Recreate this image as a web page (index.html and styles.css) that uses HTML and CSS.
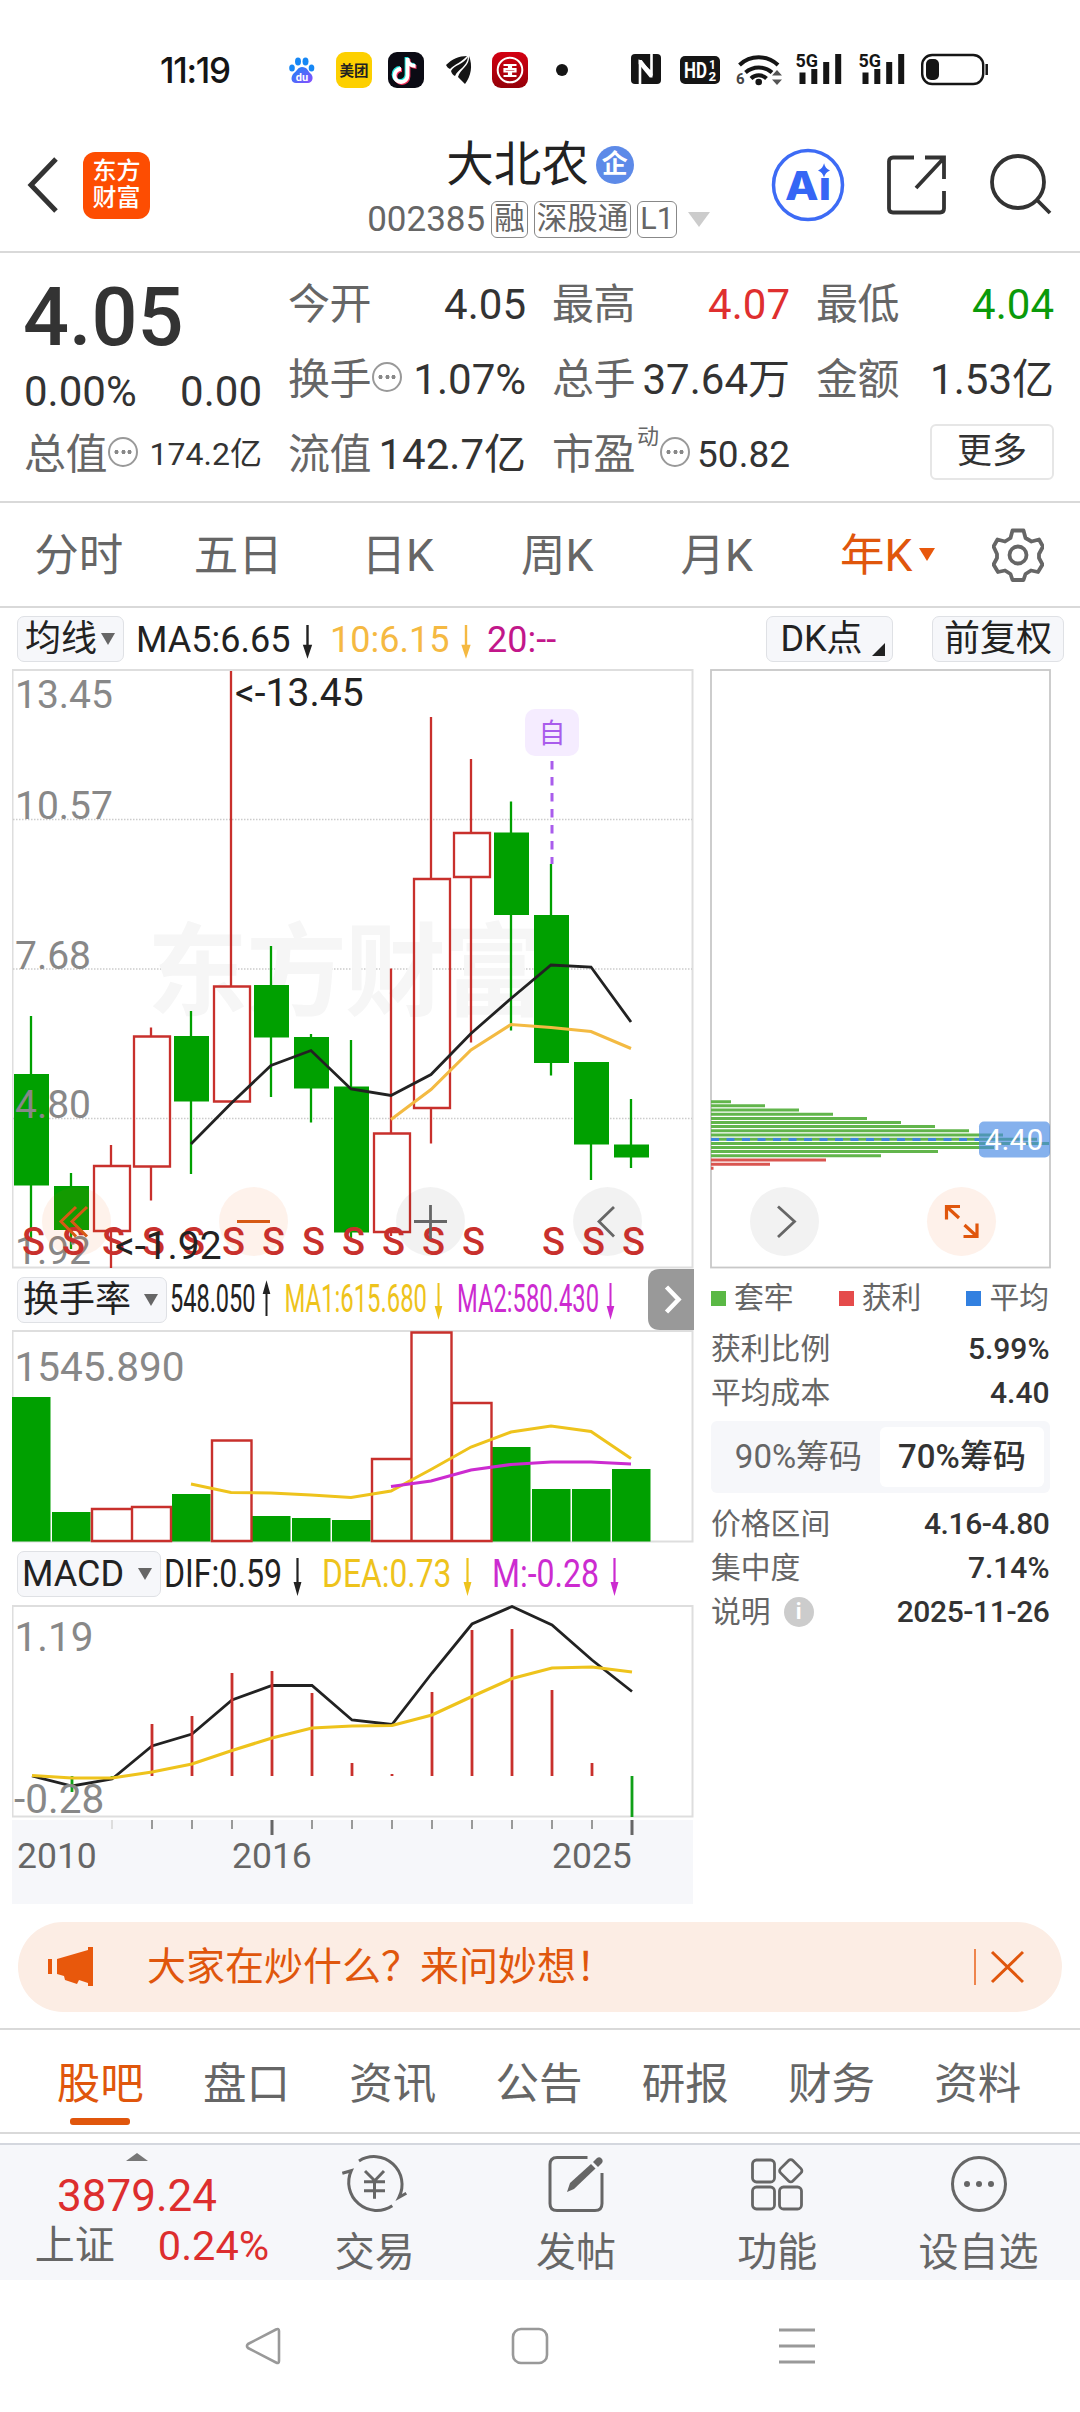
FILE: index.html
```html
<!DOCTYPE html>
<html lang="zh-CN">
<head>
<meta charset="utf-8">
<title>大北农 002385</title>
<link rel="stylesheet" href="styles.css">
</head>
<body>
<div class="screen">

<div class="status">
  <span class="time">11:19</span>
  <svg class="notices" width="282" height="40" viewBox="288 50 282 40">
    <defs>
      <linearGradient id="paw" x1="0" y1="0" x2="1" y2="1"><stop offset="0" stop-color="#1687f5"/><stop offset="1" stop-color="#8a4dff"/></linearGradient>
      <linearGradient id="bank" x1="0" y1="0" x2="0" y2="1"><stop offset="0" stop-color="#d40012"/><stop offset="1" stop-color="#940008"/></linearGradient>
    </defs>
    <g fill="#1687f5"><ellipse cx="292" cy="68" rx="2.800" ry="3.600"/><ellipse cx="298" cy="61.500" rx="3" ry="4"/><ellipse cx="305.500" cy="61.500" rx="3" ry="4"/><ellipse cx="311.500" cy="68" rx="2.800" ry="3.600"/></g>
    <path d="M302 67c5 0 6 4 8 6 5 4 2 10-2 10H296c-5 0-6-6-2-10 3-2 4-6 8-6z" fill="url(#paw)"/>
    <text x="302" y="81" class="tiny white mid" font-size="11">du</text>
    <rect x="336" y="52" width="36" height="36" rx="9" fill="#fdd000"/>
    <text x="354" y="75.500" class="bold mid" font-size="14.500" fill="#222">美团</text>
    <rect x="388" y="52" width="36" height="36" rx="9" fill="#0b0b14"/>
    <g fill="none" stroke-width="3.800"><path d="M407.500 58v17.500a6.500 6.500 0 1 1-6.500-6.500M407.500 58c0 5 3 8 8 8" stroke="#22e6e0" transform="translate(-1 -1)"/><path d="M407.500 58v17.500a6.500 6.500 0 1 1-6.500-6.500M407.500 58c0 5 3 8 8 8" stroke="#f5305c" transform="translate(1 1)"/><path d="M407.500 58v17.500a6.500 6.500 0 1 1-6.500-6.500M407.500 58c0 5 3 8 8 8" stroke="#fff"/></g>
    <path d="M467 56c-8 0-15 3-21 9 1 2 2 3 4 4 5-5 12-7 17-13zM468 57c-4 7-14 8-17 14 1 3 2 4 4 5 3-7 12-9 13-19zM469 56c1 10-9 13-11 21l7 7c6-8 8-18 4-28z" fill="#151515"/>
    <rect x="492" y="52" width="36" height="36" rx="9" fill="url(#bank)"/>
    <circle cx="510" cy="70" r="12.300" fill="none" stroke="#fff" stroke-width="2"/>
    <path d="M503.500 65h5.500v4h-4.500v2.500h4.500v4.500h-5.500M516.500 65H511v4h4.500v2.500H511v4.500h5.500" fill="none" stroke="#fff" stroke-width="2.200"/>
    <circle cx="562" cy="70" r="6" fill="#151515"/>
  </svg>
  <svg class="system" width="358" height="40" viewBox="631 50 358 40">
    <rect x="631" y="54" width="30" height="30" rx="4" fill="#151515"/>
    <path d="M640 84V62l11.500 11V54" fill="none" stroke="#fff" stroke-width="2.600"/><path d="M638.700 60h3l10.800 14v3.500h-2.700L638.700 64z" fill="#fff"/>
    <rect x="680" y="56" width="40" height="28" rx="5" fill="#151515"/>
    <text x="684" y="78" class="cond white" font-size="22" textLength="23" lengthAdjust="spacingAndGlyphs">HD</text>
    <text x="709" y="69" class="bold white" font-size="12">1</text><text x="708.500" y="81" class="bold white" font-size="13.500">2</text>
    <g fill="none" stroke="#151515" stroke-width="4"><path d="M739.500 65a28 28 0 0 1 38.500 0"/><path d="M745.500 72.500a20 20 0 0 1 26.500 0"/><path d="M751 79.500a11 11 0 0 1 15.500 0" transform="translate(0 -1)"/></g>
    <circle cx="758.700" cy="82" r="3.300" fill="#151515"/>
    <text x="736" y="84" class="bold" font-size="15" fill="#444">6</text>
    <path d="M772 75.500l5-5.500 5 5.500zM772 79.500l5 5.500 5-5.500z" fill="#555"/>
    <g id="sim"><text x="795.500" y="66.500" class="bold" font-size="18.500" fill="#151515" textLength="22.500" lengthAdjust="spacingAndGlyphs">5G</text><path d="M802.500 72.500v11.500M814.300 69v15M826.200 62v22M838.200 54v30" fill="none" stroke="#151515" stroke-width="6"/></g>
    <use href="#sim" x="63"/>
    <rect x="922.200" y="55" width="61" height="29" rx="10" fill="none" stroke="#151515" stroke-width="2.400"/>
    <rect x="926" y="59" width="13" height="21" rx="5" fill="#151515"/>
    <path d="M986.700 64v11" stroke="#151515" stroke-width="2.500"/>
  </svg>
</div>

<header class="header">
  <div class="head-left">
    <svg width="32" height="56" viewBox="0 0 32 56"><path d="M29 2L4 28l25 26" fill="none" stroke="#333" stroke-width="5"/></svg>
    <div class="logo"><span>东方</span><span>财富</span></div>
  </div>
  <div class="head-title">
    <div class="name">大北农<span class="qi">企</span></div>
    <div class="code"><span>002385</span><i>融</i><i>深股通</i><i>L1</i><svg width="24" height="17" viewBox="0 0 24 17"><path d="M1 1h22L12 16z" fill="#ccc"/></svg></div>
  </div>
  <div class="head-right">
    <svg width="74" height="74" viewBox="0 0 74 74"><circle cx="37" cy="37" r="34.500" fill="none" stroke="#3d6bf5" stroke-width="3.500"/><text x="14" y="51.500" font-size="40" class="ai" textLength="46" lengthAdjust="spacingAndGlyphs">Ai</text><circle cx="53" cy="20" r="8.500" fill="#fff"/><path d="M53 15c1 4 2.500 6 6 7.500-3.500 1.500-5 3.500-6 7-1-3.500-2.500-5.500-6-7 3.500-1.500 5-3.500 6-7z" fill="#3566f5"/></svg>
    <svg width="60" height="60" viewBox="0 0 60 60" fill="none" stroke="#333" stroke-width="3.800"><path d="M27 2.500H6q-4 0-4 4v47q0 4 4 4h47q4 0 4-4V36M38 2.500h19V24M56 4L29 33"/></svg>
    <svg width="64" height="64" viewBox="0 0 64 64" fill="none" stroke="#333" stroke-width="3.800"><circle cx="29" cy="29" r="26"/><path d="M48 47l13 13"/></svg>
  </div>
</header>

<section class="quote">
  <div class="col">
    <div class="price">4.05</div>
    <div class="change"><b>0.00%</b><b>0.00</b></div>
    <div class="row"><span>总值</span><u class="dots"></u><b class="s32">174.2亿</b></div>
  </div>
  <div class="col">
    <div class="row"><span>今开</span><b>4.05</b></div>
    <div class="row"><span>换手</span><u class="dots"></u><b>1.07%</b></div>
    <div class="row"><span>流值</span><b>142.7亿</b></div>
  </div>
  <div class="col">
    <div class="row"><span>最高</span><b class="up">4.07</b></div>
    <div class="row"><span>总手</span><b>37.64万</b></div>
    <div class="row"><span>市盈</span><sup>动</sup><u class="dots"></u><b class="s37">50.82</b></div>
  </div>
  <div class="col">
    <div class="row"><span>最低</span><b class="down">4.04</b></div>
    <div class="row"><span>金额</span><b>1.53亿</b></div>
    <div class="row"><button class="more">更多</button></div>
  </div>
</section>

<nav class="periods">
  <a>分时</a><a>五日</a><a>日K</a><a>周K</a><a>月K</a><a class="on">年K<svg width="16" height="13" viewBox="0 0 16 13"><path d="M0 0h16L8 13z" fill="#e8580c"/></svg></a>
  <svg class="gear" width="52" height="54" viewBox="0 0 52 54" fill="none" stroke="#666" stroke-width="3.800" stroke-linejoin="round"><path d="M20.500 2.500h11l2 7.500 6 3.500 7.500-2 4 7-4 7.500v4l3.500 6.500-4.500 7.500-7-1.500-5.500 3.500-2 6h-11l-2-6-5.500-3.500-7 1.500-4.500-7.500L5 30v-4L1.500 18.500l4-7 7.500 2 5.500-3.500z"/><circle cx="26" cy="27" r="8.500"/></svg>
</nav>

<div class="legend main-legend">
  <button class="chip-btn ma-btn">均线<svg width="14" height="12" viewBox="0 0 14 12"><path d="M0 0h14L7 12z" fill="#666"/></svg></button>
  <svg width="642" height="56" viewBox="124 610 642 56" font-size="36">
    <text x="136" y="651" fill="#222">MA5:6.65</text><path d="M307.500 624v24M304.500 645h6l-3 9z" fill="#222" stroke="#222" stroke-width="2.400"/>
    <text x="330" y="651" fill="#f5b942">10:6.15</text><path d="M466 624v24M463 645h6l-3 9z" fill="#f5b942" stroke="#f5b942" stroke-width="2.400"/>
    <text x="487" y="651" fill="#c2178a">20:--</text>
  </svg>
  <button class="chip-btn dk-btn">DK点<svg width="13" height="13" viewBox="0 0 13 13"><path d="M13 0v13H0z" fill="#222"/></svg></button>
  <button class="chip-btn fq-btn">前复权</button>
</div>

<main class="charts">
<div class="left">
<svg class="panel" width="682" height="600" viewBox="12 669 682 600">
  <rect x="12.500" y="670" width="680" height="597.500" fill="#fff" stroke="#dedede" stroke-width="2"/>
  <path d="M13 819.500H692M13 969H692M13 1118.500H692" stroke="#ccc" stroke-width="1.300" stroke-dasharray="1.500 1.500"/>
  <text x="147" y="1008" font-size="101" class="mark">东方财富</text>
  <g fill="none" stroke="#00a000" stroke-width="2.300"><path d="M31 1016V1240M71 1173V1249M191 1011V1174M271 946V1097M311 1034V1122.500M351 1040V1239M511 801.500V1030.500M551 864V1075.500M591 1140V1180M631 1099V1168"/></g>
  <g fill="#00a000"><path d="M14 1074h35v111.500H14zM54 1186h35v44H54zM174 1036h35v65.500h-35zM254 985h35v52.500h-35zM294 1037h35v51.500h-35zM334 1086.500h35v146h-35zM494 832.500h35V915h-35zM534 915h35v148h-35zM574 1062h35v82.500h-35zM614 1144.500h35v13h-35z"/></g>
  <g fill="none" stroke="#c8302c" stroke-width="2.300"><path d="M111 1145v21M111 1231v37M151 1027.500v9M151 1166.500v34M231 671V986.500M391 968.500v165M391 1232v4M431 717V879M431 1108v35.500M471 759v74M471 877v165.500"/>
  <path d="M94 1166h36v65H94zM134 1036.500h36v130h-36zM214 986.500h36v115h-36zM374 1133.500h36v98.500h-36zM414 879h36v229h-36zM454 833h36v44h-36z"/></g>
  <path d="M191 1144L231 1103.500 271 1065.500 311 1050.500 351 1089 391 1095.500 431 1074.500 471 1033.500 511 998.500 551 965 591 967 631 1022" fill="none" stroke="#222" stroke-width="2.800"/>
  <path d="M391 1119.500L431 1089.500 471 1050 511 1024.500 551 1027.500 591 1031.500 631 1048.500" fill="none" stroke="#f3ba42" stroke-width="3"/>
  <g font-size="39" fill="#888"><text x="15" y="708">13.45</text><text x="15" y="819">10.57</text><text x="15" y="968.500">7.68</text><text x="15" y="1118">4.80</text><text x="15" y="1263.500">1.92</text></g>
  <rect x="525" y="709" width="54" height="47" rx="10" fill="#f5ecff"/><text x="552" y="743" font-size="27" class="mid" fill="#a95cec">自</text>
  <path d="M552 761V864" stroke="#a95cec" stroke-width="3" stroke-dasharray="8.500 7.500"/>
  <circle cx="76.500" cy="1221.500" r="34.500" fill="#f05a00" fill-opacity=".08"/><circle cx="253.500" cy="1221.500" r="34.500" fill="#f05a00" fill-opacity=".08"/><circle cx="430.500" cy="1221.500" r="34.500" fill="#000" fill-opacity=".05"/><circle cx="607.500" cy="1221.500" r="34.500" fill="#000" fill-opacity=".05"/>
  <g class="sell" font-size="38"><text x="33.500" y="1255">S</text><text x="73.500" y="1255">S</text><text x="113.500" y="1255">S</text><text x="153.500" y="1255">S</text><text x="193.500" y="1255">S</text><text x="233.500" y="1255">S</text><text x="273.500" y="1255">S</text><text x="313.500" y="1255">S</text><text x="353.500" y="1255">S</text><text x="393.500" y="1255">S</text><text x="433.500" y="1255">S</text><text x="473.500" y="1255">S</text><text x="553.500" y="1255">S</text><text x="593.500" y="1255">S</text><text x="633.500" y="1255">S</text></g>
  <g font-size="39" fill="#222"><text x="235" y="706">&lt;-13.45</text><text x="115" y="1258.500">&lt;-1.92</text></g>
  <path d="M76 1207l-15 14.500 15 15M87 1207l-15 14.500 15 15M237 1221.500h33" fill="none" stroke="#d65a14" stroke-width="3"/>
  <path d="M414 1221.500h33M430.500 1205v34M614 1207l-15 14.500 15 15" fill="none" stroke="#666" stroke-width="2.800"/>
</svg>

<div class="legend sub-legend">
  <button class="chip-btn hs-btn">换手率<svg width="14" height="12" viewBox="0 0 14 12"><path d="M0 0h14L7 12z" fill="#666"/></svg></button>
  <svg width="481" height="61" viewBox="167 1269 481 61" font-size="39.500">
    <text x="170" y="1312" fill="#222" textLength="85.500" lengthAdjust="spacingAndGlyphs">548.050</text><path d="M266.500 1316v-24M264 1293h5l-2.500-9z" fill="#222" stroke="#222" stroke-width="2"/>
    <text x="284.500" y="1312" fill="#eec31c" textLength="142.500" lengthAdjust="spacingAndGlyphs">MA1:615.680</text><path d="M438.500 1283v24M436 1307h5l-2.500 9z" fill="#eec31c" stroke="#eec31c" stroke-width="2"/>
    <text x="457" y="1312" fill="#cc2bd0" textLength="142" lengthAdjust="spacingAndGlyphs">MA2:580.430</text><path d="M610.500 1283v24M608 1307h5l-2.500 9z" fill="#cc2bd0" stroke="#cc2bd0" stroke-width="2"/>
  </svg>
  <svg width="46" height="61" viewBox="0 0 46 61"><path d="M46 0H12Q0 0 0 12v37q0 12 12 12h34z" fill="#999"/><path d="M18.500 18l12 12.500-12 12.500" fill="none" stroke="#fff" stroke-width="4.500"/></svg>
</div>

<svg class="panel" width="682" height="213" viewBox="12 1330 682 213">
  <rect x="12.500" y="1331" width="680" height="210.500" fill="#fff" stroke="#dedede" stroke-width="2"/>
  <path fill="#00a000" d="M12 1397h38.500v144.500H12zM52 1512h38.500v29.500H52zM172 1494h38.500v47.500H172zM252 1516h38.500v25.500H252zM292 1518h38.500v23.500H292zM332 1520h38.500v21.500H332zM492 1447h38.500v94.500H492zM532 1489h38.500v52.500H532zM572 1489h38.500v52.500H572zM612 1469h38.500v72.500H612z"/>
  <path fill="#fff" stroke="#c8302c" stroke-width="2.400" d="M92 1509h40v32H92zM132 1507h39v34h-39zM212 1440.500h39.500V1541H212zM372 1459h39.500v82H372zM411.500 1332.500h40V1541h-40zM452 1403h39.500v138H452z"/>
  <path d="M191 1484L231 1492.500 271 1493 311 1495 351 1497.500 391 1491 431 1469.500 471 1447 511 1432 551 1426 591 1431.500 631 1458.500" fill="none" stroke="#eec31c" stroke-width="3"/>
  <path d="M391 1486.500L431 1481 471 1470 511 1464.500 551 1462 591 1462 631 1464" fill="none" stroke="#cc2bd0" stroke-width="3.200"/>
  <text x="14.500" y="1381" font-size="40.500" fill="#888">1545.890</text>
</svg>

<div class="legend macd-legend">
  <button class="chip-btn macd-btn">MACD<svg width="14" height="12" viewBox="0 0 14 12"><path d="M0 0h14L7 12z" fill="#666"/></svg></button>
  <svg width="530" height="62" viewBox="161 1543 530 62" font-size="38.500">
    <text x="164" y="1587" fill="#222" textLength="118" lengthAdjust="spacingAndGlyphs">DIF:0.59</text><path d="M297.500 1558v24M295 1583h5l-2.500 9z" fill="#222" stroke="#222" stroke-width="2.200"/>
    <text x="322" y="1587" fill="#eec31c" textLength="129.500" lengthAdjust="spacingAndGlyphs">DEA:0.73</text><path d="M467.500 1558v24M465 1583h5l-2.500 9z" fill="#eec31c" stroke="#eec31c" stroke-width="2.200"/>
    <text x="492" y="1587" fill="#cc2bd0" textLength="107" lengthAdjust="spacingAndGlyphs">M:-0.28</text><path d="M614.500 1558v24M612 1583h5l-2.500 9z" fill="#cc2bd0" stroke="#cc2bd0" stroke-width="2.200"/>
  </svg>
</div>

<svg class="panel" width="682" height="215" viewBox="12 1605 682 215">
  <rect x="12.500" y="1606" width="680" height="210.500" fill="#fff" stroke="#dedede" stroke-width="2"/>
  <path d="M32 1776L72 1786 112 1779 152 1746 192 1734 232 1700 272 1685.500 312 1685.500 352 1720 392 1724.500 432 1673 472 1624 512 1606.500 552 1625 592 1660 632 1691.500" fill="none" stroke="#222" stroke-width="2.800"/>
  <path d="M152 1776V1724M192 1776V1716M232 1776V1673M272 1776V1671M312 1776V1693M352 1776V1763M392 1776V1774M432 1776V1692M472 1776V1630M512 1776V1629M552 1776V1690M592 1776V1763" stroke="#c8302c" stroke-width="2.800"/>
  <path d="M72 1776V1792M112 1776V1779M632 1776V1817" stroke="#10a018" stroke-width="2.800"/>
  <path d="M32 1775.500L72 1778 112 1778 152 1772 192 1764 232 1750.500 272 1738 312 1728 352 1726 392 1725.500 432 1715 472 1696.500 512 1678.500 552 1668 592 1667 632 1672" fill="none" stroke="#eec31c" stroke-width="3.200"/>
  <g font-size="40.500" fill="#888"><text x="14.500" y="1651">1.19</text><text x="14" y="1813">-0.28</text></g>
</svg>
<svg class="axis" width="681" height="84" viewBox="12 1820 681 84">
  <path d="M112 1820v9" stroke="#ddd" stroke-width="2"/>
  <path d="M152 1820v9M192 1820v9M232 1820v9M312 1820v9M352 1820v9M392 1820v9M432 1820v9M472 1820v9M512 1820v9M552 1820v9M592 1820v9" stroke="#999" stroke-width="2"/>
  <path d="M272 1820v15M632 1820v15" stroke="#666" stroke-width="3"/>
  <g font-size="35.500" fill="#666"><text x="17" y="1868">2010</text><text x="232" y="1868">2016</text><text x="552" y="1868">2025</text></g>
</svg>
</div>

<aside class="right">
<svg class="panel" width="342" height="600" viewBox="710 669 342 600">
  <rect x="711" y="670" width="339" height="597.500" fill="#fff" stroke="#c8c8c8" stroke-width="1.800"/>
  <path d="M711 1101.700h20M711 1105.800h54M711 1110h88M711 1114.200h122M711 1118.400h156M711 1122.500h190M711 1126.600h224M711 1130.800h258M711 1135h292M711 1139.200h326M711 1143.400h338M711 1147.500h283M711 1151.600h227M711 1155.800h170" stroke="#62b54c" stroke-width="3"/>
  <path d="M711 1160h115M711 1164.200h59M711 1168.300h2.500" stroke="#d95550" stroke-width="3"/>
  <path d="M711 1139.500h268" stroke="#3b86dc" stroke-width="3" stroke-dasharray="8 7.500"/>
  <rect x="979" y="1121.500" width="71" height="36" rx="5" fill="#4688e4" fill-opacity=".66"/>
  <text x="1014" y="1150" font-size="30" class="mid" fill="#fff">4.40</text>
  <circle cx="784.500" cy="1221.500" r="34.500" fill="#f2f2f2"/><path d="M778 1206.500l16.500 15-16.500 15.500" fill="none" stroke="#666" stroke-width="2.800"/>
  <circle cx="961.500" cy="1221.500" r="34.500" fill="#fef1ea"/><path d="M960 1206.500h-13.500v13M947 1207l12 11M963.500 1236.500h13.500v-13M976.500 1236l-12-11" fill="none" stroke="#e0560c" stroke-width="3.200"/>
</svg>
<div class="keys"><span><i class="g"></i>套牢</span><span><i class="r"></i>获利</span><span><i class="b"></i>平均</span></div>
<dl class="stats"><div><dt>获利比例</dt><dd>5.99%</dd></div><div><dt>平均成本</dt><dd>4.40</dd></div></dl>
<div class="toggle"><span>90%筹码</span><span class="sel">70%筹码</span></div>
<dl class="stats"><div><dt>价格区间</dt><dd class="tight">4.16-4.80</dd></div><div><dt>集中度</dt><dd>7.14%</dd></div><div><dt>说明<em class="info">i</em></dt><dd class="tight">2025-11-26</dd></div></dl>
</aside>
</main>

<div class="banner">
  <svg width="46" height="40" viewBox="0 0 46 40" fill="#e8580c"><path d="M0 12h4v15H0zM9 12L40 3V0h5v39h-5v-3l-9-3-2 4-12-4-1-4-7-2z"/></svg>
  <span>大家在炒什么？来问妙想！</span>
  <svg width="50" height="38" viewBox="0 0 50 38" fill="none"><path d="M1 1v36" stroke="#e8580c" stroke-width="1.400"/><path d="M18 4l31 30M49 4L18 34" stroke="#e0560c" stroke-width="3"/></svg>
</div>

<nav class="sections"><a class="on">股吧</a><a>盘口</a><a>资讯</a><a>公告</a><a>研报</a><a>财务</a><a>资料</a></nav>

<footer class="dock">
  <div class="index">
    <svg width="22" height="8" viewBox="0 0 22 8"><path d="M11 0l11 8H0z" fill="#777"/></svg>
    <strong>3879.24</strong>
    <p><span>上证</span><b>0.24%</b></p>
  </div>
  <div class="item"><svg width="68" height="60" viewBox="0 0 68 60" fill="none" stroke="#666" stroke-width="3"><path d="M18 7A28 28 0 0 1 58 43.300L65.300 39.300M51.300 51.700A28 28 0 0 1 10.300 16.700L1.300 19.300M24 17l9.700 9.700L43 17M33.500 27v17.700M23 27.700h21M23 36.700h21"/></svg>交易</div>
  <div class="item"><svg width="60" height="60" viewBox="0 0 60 60" fill="none" stroke="#666" stroke-width="3"><path d="M41.500 3.500H11Q4 3.500 4 10.500v39q0 7 7 7h38q7 0 7-7V19"/><path d="M21 38l3-9 21-19 4.500 4.500L28 35z" fill="#666" stroke="none"/><path d="M47 8l4-4q2.500-1.500 4.500.5t.5 4.500l-4 4z" fill="#666" stroke="none"/></svg>发帖</div>
  <div class="item"><svg width="60" height="60" viewBox="0 0 60 60" fill="none" stroke="#666" stroke-width="2.800"><rect x="5.500" y="6" width="22" height="22" rx="4"/><rect x="5.500" y="33" width="22" height="22" rx="4"/><rect x="32.500" y="33" width="22" height="22" rx="4"/><rect x="35" y="8" width="17.500" height="17.500" rx="3" transform="rotate(45 43.750 16.750)"/></svg>功能</div>
  <div class="item"><svg width="60" height="60" viewBox="0 0 60 60" fill="none" stroke="#666" stroke-width="3"><circle cx="30" cy="30" r="26.500"/><g fill="#666" stroke="none"><circle cx="18" cy="30" r="3"/><circle cx="30" cy="30" r="3"/><circle cx="42" cy="30" r="3"/></g></svg>设自选</div>
</footer>

<div class="sysnav">
  <svg width="36" height="38" viewBox="0 0 36 38" fill="none" stroke="#999" stroke-width="2.600" stroke-linejoin="round"><path d="M34 4v30q0 3-3 1.500L3 21q-2-2 0-4L31 2.500q3-1.500 3 1.500z"/></svg>
  <svg width="38" height="38" viewBox="0 0 38 38" fill="none" stroke="#999" stroke-width="2.600"><rect x="2" y="2" width="34" height="34" rx="8"/></svg>
  <svg width="38" height="38" viewBox="0 0 38 38" fill="none" stroke="#999" stroke-width="2.800"><path d="M1 3h36M1 19h36M1 35h36"/></svg>
</div>

</div>
</body>
</html>
```
FILE: styles.css
```css
* { box-sizing: border-box; margin: 0; padding: 0; }
body { background: #fff; font-family: Roboto, "Noto Sans CJK SC", sans-serif; color: #333; }
svg { display: block; flex: none; }
b, i, em, u { font-weight: 400; font-style: normal; text-decoration: none; }
button { font: inherit; color: inherit; }
.screen { width: 1080px; height: 2412px; overflow: hidden; display: flex; flex-direction: column; }
.screen > * { flex: none; }
.mid { text-anchor: middle; }
.bold, .cond, .tiny { font-weight: 700; }
.white { fill: #fff; }

.status { height: 110px; padding: 30px 0 0 160px; display: flex; align-items: center; }
.time { width: 128px; font: 450 35px/80px Inter, sans-serif; letter-spacing: -1.300px; color: #151515; }
.system { margin-left: 61px; }

.header { height: 143px; padding-top: 9px; border-bottom: 2px solid #d9d9d9; display: grid; grid-template-columns: 1fr auto 1fr; align-items: center; }
.head-left { display: flex; align-items: center; gap: 24px; padding-left: 27px; }
.logo { width: 67px; height: 67px; border-radius: 12px; background: #fd4d02; color: #fff; font-size: 24px; line-height: 27px; font-weight: 500; display: flex; flex-direction: column; align-items: center; justify-content: center; }
.head-title { display: flex; flex-direction: column; align-items: center; gap: 8px; padding-top: 4px; }
.name { font-size: 47.500px; line-height: 56px; display: flex; align-items: center; gap: 7px; color: #222; }
.qi { width: 38px; height: 38px; border-radius: 50%; background: #5d8ae8; color: #fff; font-size: 26px; line-height: 36px; text-align: center; font-weight: 700; }
.code { height: 37px; display: flex; align-items: center; gap: 6px; margin-right: 2px; font-size: 35px; color: #666; }
.code i { height: 37px; border: 1.500px solid #888; border-radius: 6px; padding: 0 2px; font-size: 30.500px; line-height: 34px; }
.code svg { margin-left: 4px; }
.head-right { display: flex; align-items: center; justify-content: flex-end; gap: 42px; padding-right: 27px; }
.ai { font-family: Inter, sans-serif; font-weight: 800; fill: #3566f5; }

.quote { height: 250px; padding: 14px 24px 0 24px; border-bottom: 2px solid #d9d9d9; display: grid; grid-template-columns: repeat(4, 238px); column-gap: 26px; }
.price { font-size: 81px; line-height: 102px; height: 100px; font-weight: 500; margin-left: -1px; }
.change { height: 50px; line-height: 50px; font-size: 42px; display: flex; justify-content: space-between; }
.row { height: 75px; font-size: 42px; line-height: 75px; display: flex; align-items: center; white-space: nowrap; }
.row span { color: #666; letter-spacing: -.5px; }
.row b { margin-left: auto; }
.row .s32 { font-size: 32px; }
.row .s37 { font-size: 37px; }
.row sup { font-size: 22px; line-height: 24px; height: 60px; margin: 0 0 0 2px; color: #666; }
.dots { width: 30px; height: 30px; border: 2px solid #999; border-radius: 50%; margin: -6px 0 0 1px; background: radial-gradient(circle, #888 1.800px, transparent 2.300px) center / 7px 100% no-repeat, radial-gradient(circle, #888 1.800px, transparent 2.300px) 3px center / 7px 100% no-repeat, radial-gradient(circle, #888 1.800px, transparent 2.300px) 16px center / 7px 100% no-repeat; }
.up { color: #df2f2f; }
.down { color: #0a9a0a; }
.more { width: 124px; height: 56px; margin: -5px 0 0 auto; border: 2px solid #e6e6e6; border-radius: 6px; background: #fff; font-size: 35px; line-height: 50px; }

.periods { height: 105px; padding-top: 4px; border-bottom: 2px solid #d9d9d9; display: grid; grid-template-columns: repeat(6, 159.500px) 1fr; align-items: center; font-size: 44.500px; line-height: 99px; color: #666; }
.periods a { display: flex; justify-content: center; align-items: center; margin-left: -2px; }
.periods .on { color: #e0560c; padding-left: 23px; }
.periods .on svg { margin: -4px 0 0 7px; }
.gear { margin: -4px 0 0 35px; }

.legend { display: flex; align-items: center; }
.chip-btn { height: 46px; border: 1.500px solid #dfe1e5; border-radius: 7px; background: #f6f7fa; color: #222; font-size: 36px; line-height: 42px; display: flex; align-items: center; justify-content: center; flex: none; white-space: nowrap; }
.main-legend { height: 61px; padding-left: 17px; }
.ma-btn { width: 107px; gap: 4px; padding-right: 1px; }
.dk-btn { width: 127px; padding-left: 6px; }
.dk-btn svg { align-self: flex-end; margin: 0 0 5px 9px; }
.fq-btn { width: 132px; margin-left: 39px; }

.charts { height: 1235px; padding-left: 12px; display: flex; gap: 16px; }
.left { width: 682px; }
.sub-legend { height: 61px; padding-left: 5px; }
.hs-btn { width: 150px; gap: 13px; padding-right: 3px; }
.macd-legend { height: 62px; padding-left: 5px; }
.macd-btn { width: 144px; gap: 14px; padding-right: 4px; }
.axis { background: #f6f7fa; }
.mark { font-weight: 700; fill: #f6f6f6; letter-spacing: -2px; }
.sell { text-anchor: middle; font-weight: 500; fill: #c8302c; }

.right { width: 342px; color: #666; font-size: 29.800px; }
.keys { height: 58px; margin-left: 1px; width: 338px; display: flex; justify-content: space-between; line-height: 60px; }
.keys span { display: flex; align-items: center; gap: 8px; }
.keys i { width: 15px; height: 15px; }
.g { background: #5ab845; }
.r { background: #e54b4b; }
.b { background: #3280e0; }
.stats { margin-left: 1px; width: 338.500px; }
.stats div { height: 44px; line-height: 44px; display: flex; justify-content: space-between; }
.stats dd { color: #333; font-weight: 500; font-size: 30px; }
.stats .tight { letter-spacing: -.4px; }
.stats dt { display: flex; align-items: center; }
.info { width: 30px; height: 30px; border-radius: 50%; background: #ccc; color: #fff; font-weight: 700; font-size: 22px; line-height: 30px; text-align: center; margin-left: 13px; }
.toggle { width: 339px; height: 72px; margin: 6px 0 9px 1px; padding: 6px; background: #f6f7fa; border-radius: 6px; display: grid; grid-template-columns: 163px 164px; font-size: 33px; line-height: 60px; text-align: center; }
.toggle .sel { background: #fff; color: #333; font-weight: 500; border-radius: 6px; }

.banner { height: 90px; margin: 18px 18px 0; padding: 0 38px 0 30px; border-radius: 45px; background: #fcede4; color: #e0560c; font-size: 39px; display: flex; align-items: center; }
.banner span { flex: 1; margin-left: 53px; line-height: 89px; }

.sections { height: 106px; margin-top: 16px; border-top: 2px solid #d9d9d9; border-bottom: 2px solid #d9d9d9; padding: 0 28px; display: grid; grid-template-columns: repeat(7, 1fr); font-size: 43.500px; line-height: 110px; text-align: center; color: #666; }
.sections a { margin-left: -2px; }
.sections .on { color: #e0560c; display: flex; flex-direction: column; align-items: center; }
.sections .on::after { content: ""; width: 60px; height: 7px; margin-top: -22px; border-radius: 3px; background: #e0560c; }

.dock { height: 137px; margin-top: 9px; border-top: 2px solid #d4d7de; background: #f6f7fa; display: grid; grid-template-columns: 274px repeat(4, 201.300px); color: #666; font-size: 40px; }
.index { padding-top: 8px; display: flex; flex-direction: column; align-items: center; }
.index strong { font-weight: 400; font-size: 44px; line-height: 50px; margin-top: 10px; color: #dd2e2e; }
.index p { display: flex; gap: 43px; line-height: 50px; margin: 0 0 0 30px; }
.index b { color: #dd2e2e; font-size: 41.500px; }
.item { padding-top: 9px; display: flex; flex-direction: column; align-items: center; line-height: 56px; gap: 11px; }

.sysnav { height: 132px; padding: 0 264px 0 245px; display: flex; align-items: center; justify-content: space-between; }
```
